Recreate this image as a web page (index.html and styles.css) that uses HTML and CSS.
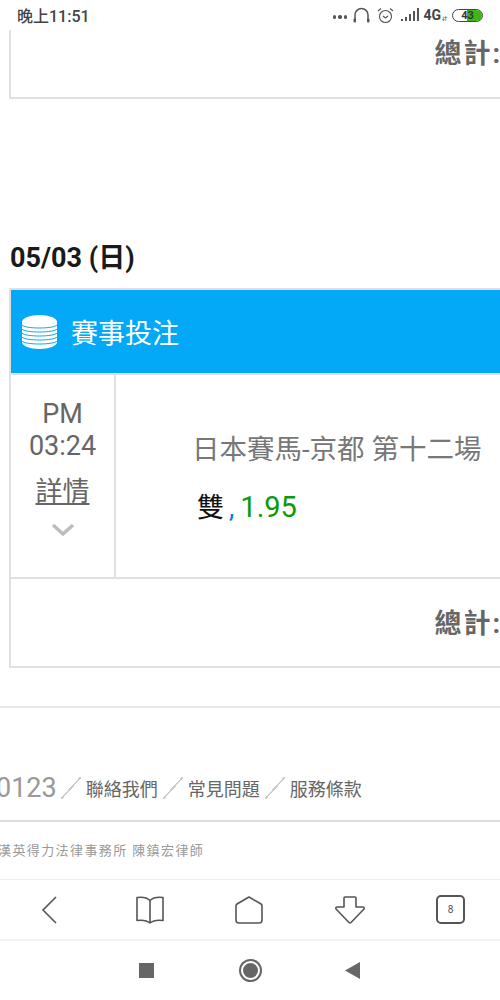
FILE: index.html
```html
<!DOCTYPE html>
<html>
<head>
  <meta charset="utf-8">
  <title>賽事投注</title>
  <link rel="stylesheet" href="styles.css">
</head>
<body>
  <div class="status-bar">
    <span class="status-time">晚上11:51</span>
    <div class="status-icons">
      <span class="dots"><i></i><i></i><i></i></span>
      <svg width="17" height="17" viewBox="0 0 17 17"><path d="M2 14V8a6.500 6.500 0 0 1 13 0v6" fill="none" stroke="#555" stroke-width="1.500"/><rect x=".5" y="11.500" width="2.500" height="4" rx="1" fill="#555"/><rect x="14" y="11.500" width="2.500" height="4" rx="1" fill="#555"/></svg>
      <svg width="17" height="17" viewBox="0 0 17 17"><circle cx="8.500" cy="9.500" r="6" fill="none" stroke="#555" stroke-width="1.100"/><path d="M6 9l2.500 2L11 9M1 4l3-2.500M16 4l-3-2.500" fill="none" stroke="#555" stroke-width="1.100"/></svg>
      <svg width="18" height="14" viewBox="0 0 18 14"><path d="M0 11h2v2H0zM4 9h2v4H4zM8 6h2v7H8zM12 3h2v10h-2zM16 0h2v13h-2z" fill="#555"/></svg>
      <span class="net">4G<small>⇵</small></span>
      <span class="battery"><span class="battery-fill"></span><span class="battery-num">43</span></span>
    </div>
  </div>

  <main class="page">
    <section class="card card-top">
      <div class="total">總計:</div>
    </section>

    <h2 class="date">05/03 (日)</h2>

    <section class="card">
      <div class="card-head">
        <svg width="35" height="34" viewBox="0 0 35 34">
          <path d="M0 7C0 3 8 0 17.500 0S35 3 35 7v20c0 4-8 7-17.500 7S0 31 0 27z" fill="#fff"/>
          <path d="M0 10c3 4 32 4 35 0M0 14c3 4 32 4 35 0M0 18c3 4 32 4 35 0M0 22c3 4 32 4 35 0M0 26c3 4 32 4 35 0" fill="none" stroke="#03a9f7" stroke-width="1"/>
        </svg>
        <span>賽事投注</span>
      </div>
      <div class="bet-row">
        <div class="bet-time">
          <div>PM</div>
          <div>03:24</div>
          <a class="detail">詳情</a>
          <svg class="chevron" width="24" height="14" viewBox="0 0 24 14"><path d="M2 2l10 9 10-9" fill="none" stroke="#bdbdbd" stroke-width="3.500"/></svg>
        </div>
        <div class="bet-info">
          <div class="bet-title">日本賽馬-京都 第十二場</div>
          <div class="bet-odds"><span class="pick">雙</span><span class="comma">,</span><span class="odds">1.95</span></div>
        </div>
      </div>
      <div class="total total-row">總計:</div>
    </section>

    <div class="footer-links">
      <span class="phone">0123</span>
      <i class="slash"></i><a>聯絡我們</a>
      <i class="slash"></i><a>常見問題</a>
      <i class="slash"></i><a>服務條款</a>
    </div>
    <div class="footer-legal">漢英得力法律事務所 陳鎮宏律師</div>
  </main>

  <nav class="browser-bar">
    <svg width="30" height="30" viewBox="0 0 30 30"><path d="M21 2L8 15l13 13" fill="none" stroke="#555" stroke-width="1.600"/></svg>
    <svg width="30" height="30" viewBox="0 0 30 30"><path d="M15 5.500C12 2.500 6 2 2 2.500v23c4-.5 10 0 13 2.500 3-2.500 9-3 13-2.500v-23c-4-.5-10 0-13 3zM15 5.500V28" fill="none" stroke="#555" stroke-width="1.600" stroke-linejoin="round"/></svg>
    <svg width="30" height="30" viewBox="0 0 30 30"><path d="M15 2l12 7c.6.400 1 1 1 2v14a3 3 0 0 1-3 3H5a3 3 0 0 1-3-3V11c0-1 .4-1.600 1-2z" fill="none" stroke="#555" stroke-width="1.600" stroke-linejoin="round"/></svg>
    <svg width="32" height="30" viewBox="0 0 32 30"><path d="M11 2h10a1 1 0 0 1 1 1v9h7c1 0 1.500 1 1 2L17 27.500c-.6.600-1.400.600-2 0L2 14c-.5-1 0-2 1-2h7V3a1 1 0 0 1 1-1z" fill="none" stroke="#555" stroke-width="1.600" stroke-linejoin="round"/></svg>
    <span class="tab-count">8</span>
  </nav>

  <nav class="system-bar">
    <span class="sys-square"></span>
    <span class="sys-circle"></span>
    <svg width="15" height="17" viewBox="0 0 15 17"><path d="M15 0v17L0 8.500z" fill="#666"/></svg>
  </nav>
</body>
</html>
```

FILE: styles.css
```css
html, body {
  margin: 0;
  padding: 0;
}

body {
  width: 500px;
  height: 1000px;
  overflow: hidden;
  background: #fff;
  font-family: Roboto, "Noto Sans CJK TC", sans-serif;
  color: #666;
}

.status-bar {
  height: 30px;
  display: flex;
  justify-content: space-between;
  align-items: center;
  padding: 0 17px;
  color: #444;
}

.status-time {
  font-size: 16px;
  font-weight: 500;
}

.status-icons {
  display: flex;
  align-items: center;
  gap: 7px;
}

.dots {
  display: flex;
  gap: 2px;
  align-self: flex-end;
  margin-bottom: 5px;
  margin-right: -1px;
}

.dots i {
  width: 3.500px;
  height: 3.500px;
  border-radius: 50%;
  background: #555;
}

.net {
  font-size: 14px;
  font-weight: 700;
  margin-left: -3px;
}

.net small {
  font-size: 5px;
  margin-left: 1px;
}

.battery {
  position: relative;
  width: 29px;
  height: 11px;
  border: 1.500px solid #444;
  border-radius: 7px;
  overflow: hidden;
  margin-left: -2px;
  text-align: center;
}

.battery-fill {
  position: absolute;
  top: 0;
  right: 0;
  bottom: 0;
  width: 15px;
  background: #3fb618;
}

.battery-num {
  position: relative;
  display: block;
  font-size: 11px;
  line-height: 11px;
  font-weight: 700;
  color: #333;
}

.page {
  height: 850px;
  overflow: hidden;
  padding-left: 9px;
}

.card {
  border: 2px solid #e0e0e0;
  border-right: 0;
}

.card-top {
  border-top: 0;
  height: 67px;
}

.total {
  height: 48px;
  font-size: 27px;
  font-weight: 700;
  line-height: 48px;
  text-align: right;
  color: #666;
  white-space: nowrap;
  letter-spacing: 2px;
  margin-right: -2px;
}

.date {
  margin: 140px 0 0 1px;
  height: 49px;
  font-size: 27px;
  line-height: 38px;
  font-weight: 700;
  color: #1a1a1a;
}

.card-head {
  height: 83px;
  display: flex;
  align-items: center;
  background: #03a9f7;
  color: #fff;
  font-size: 27px;
  padding-left: 11px;
  gap: 14px;
}

.bet-row {
  display: flex;
  height: 202px;
  border-top: 2px solid #e0e0e0;
  border-bottom: 2px solid #e0e0e0;
}

.bet-time {
  width: 103px;
  flex-shrink: 0;
  border-right: 2px solid #e0e0e0;
  display: flex;
  flex-direction: column;
  align-items: center;
  padding-top: 23px;
  font-size: 27px;
  line-height: 32px;
  color: #666;
}

.detail {
  margin-top: 14px;
  text-decoration: underline;
}

.chevron {
  margin-top: 15px;
}

.bet-info {
  padding: 56px 0 0 76px;
  white-space: nowrap;
}

.bet-title {
  font-size: 27.500px;
  line-height: 38px;
  color: #777;
}

.bet-odds {
  margin-top: 19px;
  font-size: 27px;
  line-height: 38px;
  padding-left: 5px;
}

.pick {
  color: #111;
}

.comma {
  color: #0a7ccf;
  margin: 0 6px 0 5px;
}

.odds {
  color: #0a9a0a;
  font-size: 29px;
}

.total-row {
  height: 83px;
  padding-top: 4px;
  line-height: 83px;
}

.footer-links {
  margin: 38px 0 0 -9px;
  border-top: 2px solid #e8e8e8;
  padding-top: 48px;
  height: 64px;
  display: flex;
  align-items: center;
  font-size: 18px;
  color: #666;
  white-space: nowrap;
}

.phone {
  font-size: 27px;
  color: #999;
  margin-left: -4px;
  margin-right: -1px;
}

.slash {
  width: 20px;
  height: 22px;
  margin: 0 5px;
  background: linear-gradient(to top left, transparent 47%, #ccc 47%, #ccc 53%, transparent 53%);
}

.footer-legal {
  margin-left: -9px;
  border-top: 2px solid #ddd;
  padding-top: 18px;
  font-size: 13px;
  letter-spacing: 1.400px;
  color: #999;
  white-space: nowrap;
  text-indent: -2px;
}

.browser-bar {
  height: 59px;
  border-top: 1px solid #eee;
  border-bottom: 2px solid #f3f3f3;
  display: flex;
  align-items: center;
  justify-content: space-around;
  margin-top: -1px;
}

.tab-count {
  width: 25px;
  height: 25px;
  border: 2px solid #555;
  border-radius: 5px;
  text-align: center;
  font-size: 10px;
  line-height: 25px;
  color: #555;
}

.system-bar {
  height: 58px;
  display: flex;
  align-items: center;
  justify-content: center;
  gap: 85px;
  padding-right: 2px;
}

.sys-square {
  width: 15px;
  height: 15px;
  margin-right: 2px;
  background: #666;
}

.sys-circle {
  width: 15px;
  height: 15px;
  border: 2px solid #fff;
  border-radius: 50%;
  background: #666;
  box-shadow: 0 0 0 2px #666;
}
```
